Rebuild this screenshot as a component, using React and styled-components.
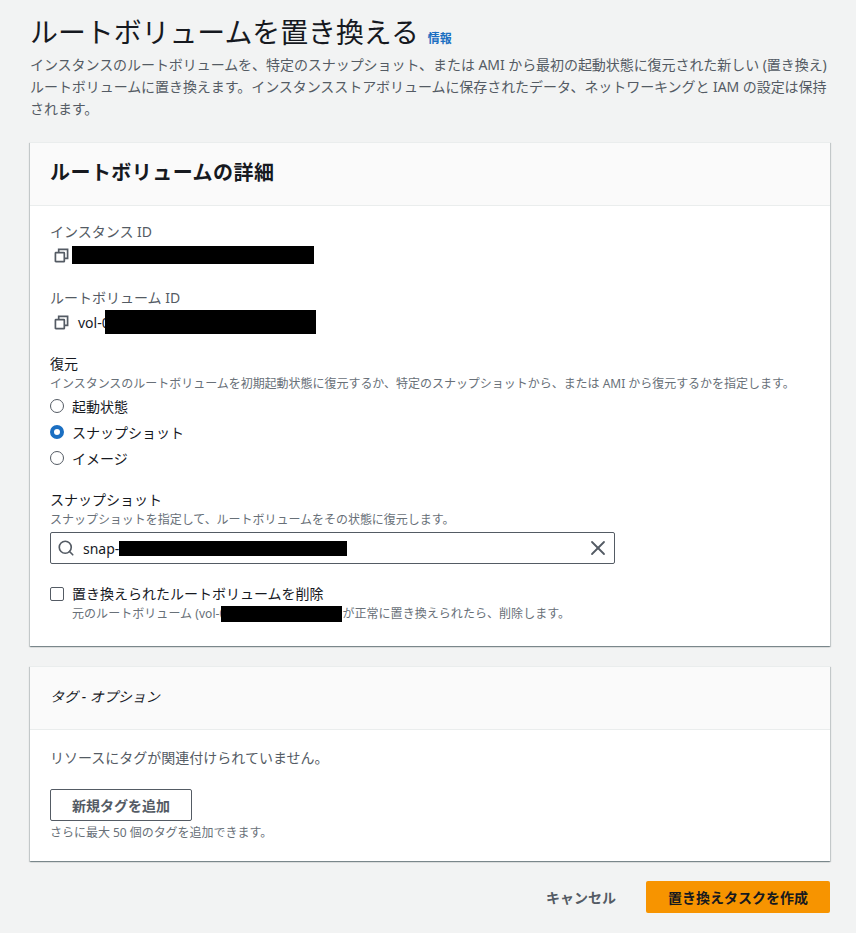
import React from "react";
import styled, { createGlobalStyle } from "styled-components";
import { Search, X } from "lucide-react";

const GlobalStyle = createGlobalStyle`
  html, body {
    margin: 0;
    padding: 0;
    background: #f2f3f3;
  }
  body {
    font-family: "Noto Sans", "Noto Sans CJK JP", sans-serif;
    color: #16191f;
  }
  * {
    box-sizing: border-box;
  }
`;

const Page = styled.div`
  width: 856px;
  height: 933px;
  overflow: hidden;
  padding: 12px 26px 0 30px;
`;

const TitleRow = styled.div`
  display: flex;
  align-items: baseline;
  gap: 9px;
  height: 42px;
`;

const Title = styled.h1`
  margin: 0;
  font-size: 27.9px;
  line-height: 40px;
  font-weight: 400;
  color: #16191f;
`;

const InfoLink = styled.a`
  font-size: 12px;
  font-weight: 700;
  color: #1b6fc2;
`;

const Description = styled.p`
  margin: 0 0 22px;
  font-size: 14px;
  line-height: 22px;
  color: #545b64;
  white-space: nowrap;
  letter-spacing: -0.06px;
`;

const Card = styled.section`
  background: #fff;
  border-top: 1px solid #eaeded;
  box-shadow: 0 1px 1px 0 rgba(0, 28, 36, 0.3), 1px 1px 1px 0 rgba(0, 28, 36, 0.15),
    -1px 1px 1px 0 rgba(0, 28, 36, 0.15);
  margin-bottom: ${(p) => p.$gap}px;
`;

const CardHeader = styled.header`
  display: flex;
  align-items: center;
  height: 63px;
  padding: 0 20px 5px;
  background: #fafafa;
  border-bottom: 1px solid #eaeded;
`;

const CardTitle = styled.h2`
  margin: 0;
  font-size: 20px;
  letter-spacing: 0.45px;
  font-weight: 700;
`;

const TagsTitle = styled.h2`
  margin: 0;
  font-size: 14px;
  font-weight: 400;
  font-style: italic;
`;

const CardBody = styled.div`
  display: flex;
  flex-direction: column;
  padding: ${(p) => p.$padding};
`;

const ReadOnlyField = styled.div`
  display: flex;
  flex-direction: column;
  margin-bottom: ${(p) => p.$gap}px;
`;

const MutedLabel = styled.div`
  font-size: 14px;
  line-height: 22px;
  color: #545b64;
`;

const ValueRow = styled.div`
  display: flex;
  align-items: center;
  height: 24px;
  margin-top: ${(p) => p.$top}px;
  padding-left: 4px;
  font-size: 14px;
`;

const CopyIcon = styled.svg`
  width: 15px;
  height: 15px;
  flex: none;
  margin-right: ${(p) => p.$gap}px;
  fill: none;
  stroke: #545b64;
  stroke-width: 1.8;
`;

const Redaction = styled.span`
  display: inline-block;
  flex: none;
  width: ${(p) => p.$width}px;
  height: ${(p) => p.$height}px;
  margin-left: ${(p) => p.$overlap || 0}px;
  background: #000;
`;

const FieldLabel = styled.div`
  font-size: 14px;
  line-height: 20px;
`;

const Hint = styled.div`
  margin-top: 1px;
  font-size: 12px;
  line-height: 18px;
  letter-spacing: -0.03px;
  color: #687078;
`;

const TagHint = styled(Hint)`
  margin-top: 3px;
`;

const RadioGroup = styled.div`
  display: flex;
  flex-direction: column;
  margin: 0 0 19px;
`;

const RadioRow = styled.label`
  display: flex;
  align-items: center;
  gap: 8px;
  height: 26px;
  font-size: 14px;
`;

const RadioDot = styled.span`
  width: 14px;
  height: 14px;
  flex: none;
  border-radius: 50%;
  background: #fff;
  border: ${(p) => (p.$on ? "4px solid #1b6fc2" : "1px solid #545b64")};
`;

const SearchBox = styled.div`
  display: flex;
  align-items: center;
  width: 565px;
  height: 32px;
  margin: 3px 0 20px;
  padding: 0 8px 0 6px;
  background: #fff;
  border: 1px solid #545b64;
  border-radius: 2px;
  font-size: 14px;
  color: #16191f;
  svg {
    flex: none;
    color: #545b64;
  }
`;

const SearchText = styled.span`
  margin-left: 8px;
`;

const ClearButton = styled.span`
  display: flex;
  margin-left: auto;
  margin-right: -4px;
`;

const CheckRow = styled.div`
  display: flex;
  gap: 8px;
`;

const CheckBox = styled.span`
  width: 14px;
  height: 14px;
  flex: none;
  margin-top: 3px;
  background: #fff;
  border: 1px solid #545b64;
  border-radius: 2px;
`;

const CheckHint = styled.div`
  display: flex;
  align-items: center;
  margin-top: 1px;
  font-size: 12px;
  line-height: 18px;
  letter-spacing: 0.05px;
  color: #687078;
`;

const EmptyText = styled.div`
  font-size: 14px;
  line-height: 22px;
  color: #545b64;
`;

const OutlineButton = styled.button`
  width: 142px;
  height: 32px;
  margin-top: 20px;
  padding: 0;
  background: #fff;
  border: 1px solid #545b64;
  border-radius: 2px;
  font: 700 14px "Noto Sans", "Noto Sans CJK JP", sans-serif;
  color: #545b64;
`;

const Footer = styled.div`
  display: flex;
  justify-content: flex-end;
  align-items: center;
  gap: 30px;
`;

const LinkButton = styled.button`
  padding: 0;
  background: none;
  border: 0;
  font: 700 14px "Noto Sans", "Noto Sans CJK JP", sans-serif;
  color: #545b64;
`;

const PrimaryButton = styled.button`
  width: 184px;
  height: 32px;
  padding: 0;
  background: #f79400;
  border: 0;
  border-radius: 2px;
  font: 700 14px "Noto Sans", "Noto Sans CJK JP", sans-serif;
  color: #16191f;
`;

const Copy = ({ gap }) => (
  <CopyIcon viewBox="0 0 16 16" $gap={gap}>
    <rect x="1.5" y="5" width="9.5" height="9.5" rx="0.5" />
    <path d="M5 5V1.5h9.5V11H11" />
  </CopyIcon>
);

const restoreOptions = [
  { label: "起動状態", on: false },
  { label: "スナップショット", on: true },
  { label: "イメージ", on: false },
];

export default function App() {
  return (
    <Page>
      <GlobalStyle />
      <TitleRow>
        <Title>ルートボリュームを置き換える</Title>
        <InfoLink>情報</InfoLink>
      </TitleRow>
      <Description>
        インスタンスのルートボリュームを、特定のスナップショット、または AMI から最初の起動状態に復元された新しい (置き換え)
        <br />
        ルートボリュームに置き換えます。インスタンスストアボリュームに保存されたデータ、ネットワーキングと IAM の設定は保持
        <br />
        されます。
      </Description>

      <Card $gap={20}>
        <CardHeader>
          <CardTitle>ルートボリュームの詳細</CardTitle>
        </CardHeader>
        <CardBody $padding="15px 20px 23px">
          <ReadOnlyField $gap={20}>
            <MutedLabel>インスタンス ID</MutedLabel>
            <ValueRow $top={0}>
              <Copy gap={3} />
              <Redaction $width={242} $height={18} />
            </ValueRow>
          </ReadOnlyField>
          <ReadOnlyField $gap={20}>
            <MutedLabel>ルートボリューム ID</MutedLabel>
            <ValueRow $top={1}>
              <Copy gap={9} />
              vol-0
              <Redaction $width={211} $height={24} $overlap={-5} />
            </ValueRow>
          </ReadOnlyField>

          <FieldLabel>復元</FieldLabel>
          <Hint>インスタンスのルートボリュームを初期起動状態に復元するか、特定のスナップショットから、または AMI から復元するかを指定します。</Hint>
          <RadioGroup>
            {restoreOptions.map((o) => (
              <RadioRow key={o.label}>
                <RadioDot $on={o.on} />
                {o.label}
              </RadioRow>
            ))}
          </RadioGroup>

          <FieldLabel>スナップショット</FieldLabel>
          <Hint>スナップショットを指定して、ルートボリュームをその状態に復元します。</Hint>
          <SearchBox>
            <Search size={18} strokeWidth={2.2} />
            <SearchText>snap-</SearchText>
            <Redaction $width={228} $height={15} />
            <ClearButton>
              <X size={24} strokeWidth={1.8} />
            </ClearButton>
          </SearchBox>

          <CheckRow>
            <CheckBox />
            <div>
              <FieldLabel>置き換えられたルートボリュームを削除</FieldLabel>
              <CheckHint>
                元のルートボリューム (vol-0
                <Redaction $width={121} $height={16} $overlap={-5} />
                が正常に置き換えられたら、削除します。
              </CheckHint>
            </div>
          </CheckRow>
        </CardBody>
      </Card>

      <Card $gap={20}>
        <CardHeader>
          <TagsTitle>タグ - オプション</TagsTitle>
        </CardHeader>
        <CardBody $padding="17px 20px 19px">
          <EmptyText>リソースにタグが関連付けられていません。</EmptyText>
          <div>
            <OutlineButton>新規タグを追加</OutlineButton>
          </div>
          <TagHint>さらに最大 50 個のタグを追加できます。</TagHint>
        </CardBody>
      </Card>

      <Footer>
        <LinkButton>キャンセル</LinkButton>
        <PrimaryButton>置き換えタスクを作成</PrimaryButton>
      </Footer>
    </Page>
  );
}
